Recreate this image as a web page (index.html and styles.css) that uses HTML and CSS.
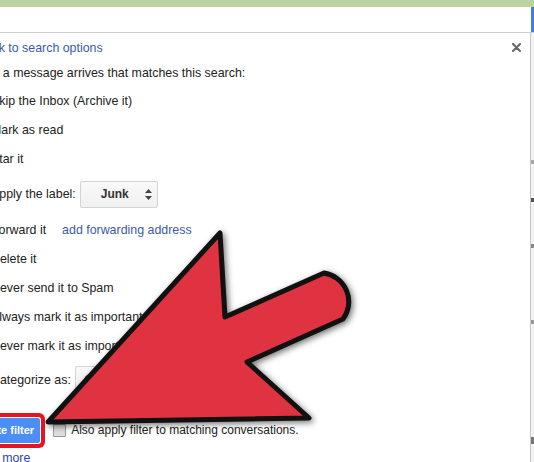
FILE: index.html
```html
<!DOCTYPE html>
<html lang="en">
<head>
    <meta charset="UTF-8">
    <title>Create filter</title>
    <link rel="stylesheet" href="styles.css">
</head>
<body>

    <div class="topbar"></div>
    <div class="searchrow"><span class="edge"></span></div>

    <div class="page">
        <div class="dialog">
            <svg class="close" width="9" height="9" viewBox="0 0 9 9">
                <path d="M1 1 L8 8 M8 1 L1 8" stroke="#6b6b6b" stroke-width="2.2" stroke-linecap="round"/>
            </svg>
            <div class="content">
                <div class="back"><a href="#">&laquo; Back to search options</a></div>
                <div class="intro">When a message arrives that matches this search:</div>

                <div class="opt"><span class="cb"></span>Skip the Inbox (Archive it)</div>
                <div class="opt"><span class="cb"></span>Mark as read</div>
                <div class="opt"><span class="cb"></span>Star it</div>
                <div class="opt apply">
                    <span class="cb"></span>Apply the label:
                    <span class="select junk">Junk
                        <svg width="7" height="11" viewBox="0 0 7 11"><path d="M3.5 0 L7 4 H0 Z M0 7 H7 L3.5 11 Z" fill="#444"/></svg>
                    </span>
                </div>
                <div class="opt"><span class="cb"></span>Forward it <a class="fwd" href="#">add forwarding address</a></div>
                <div class="opt"><span class="cb"></span>Delete it</div>
                <div class="opt"><span class="cb"></span>Never send it to Spam</div>
                <div class="opt"><span class="cb"></span>Always mark it as important</div>
                <div class="opt"><span class="cb"></span>Never mark it as important</div>
                <div class="opt categorize">
                    <span class="cb"></span>Categorize as:
                    <span class="select category">Choose category...</span>
                </div>

                <div class="actions">
                    <button class="create">Create filter</button>
                    <span class="cb small"></span>
                    <span class="also">Also apply filter to matching conversations.</span>
                </div>
                <div class="learn"><a href="#">Learn more</a></div>
            </div>
        </div>
        <div class="side">
            <span class="mark m1"></span>
            <span class="mark m2"></span>
            <span class="mark m3"></span>
            <span class="mark m4"></span>
            <span class="mark m5"></span>
        </div>
    </div>

    <!-- big red pointer drawn over the dialog -->
    <svg class="arrow" width="534" height="462" viewBox="0 0 534 462">
        <path d="M48 422 L220 233 L225 317 L324 273 A29 29 0 0 1 343 319 L247 362 L309 418 Z"
              fill="#e03341" stroke="#111" stroke-width="5" stroke-linejoin="round"/>
    </svg>

</body>
</html>
```

FILE: styles.css
```css
* {
    margin: 0;
    padding: 0;
    box-sizing: border-box;
}

body {
    width: 534px;
    height: 462px;
    overflow: hidden;
    position: relative;
    background: #fff;
    font-family: "Liberation Sans", Arial, sans-serif;
    font-size: 12.4px;
    color: #222;
}

a {
    color: #3a5aa8;
    text-decoration: none;
}

.topbar {
    height: 7px;
    background: #bcd2a1;
}

.searchrow {
    height: 26px;
    display: flex;
    justify-content: flex-end;
    border-bottom: 1px solid #cfcfcf;
}

.searchrow .edge {
    width: 3px;
    background: #3f7ee6;
}

.page {
    display: flex;
    height: 429px;
}

.dialog {
    flex: 1;
    position: relative;
    overflow: hidden;
}

.close {
    position: absolute;
    top: 10px;
    right: 9px;
}

.content {
    margin-left: -33px;
    padding-top: 3px;
    white-space: nowrap;
}

.back {
    height: 24px;
    line-height: 24px;
}

.intro {
    height: 26px;
    line-height: 26px;
}

.opt {
    height: 29px;
    display: flex;
    align-items: center;
    padding-left: 5px;
}

.cb {
    width: 13px;
    height: 13px;
    border: 1px solid #b5b5b5;
    border-radius: 1px;
    margin-right: 6px;
    background: #fff;
}

.apply {
    height: 42px;
}

.categorize {
    height: 40px;
}

.select {
    display: inline-flex;
    align-items: center;
    height: 27px;
    border: 1px solid #d3d3d3;
    border-radius: 2px;
    background: linear-gradient(#f9f9f9, #f0f0f0);
    font-size: 12px;
    color: #333;
}

.junk {
    width: 78px;
    margin-left: 4px;
    padding: 0 5px 0 20px;
    justify-content: space-between;
    font-weight: bold;
}

.category {
    margin-left: 4px;
    padding: 0 24px 0 8px;
    height: 28px;
}

.fwd {
    margin-left: 16px;
}

.actions {
    margin-top: 8px;
    height: 44px;
    display: flex;
    align-items: center;
}

.create {
    margin-left: 0;
    height: 25px;
    padding: 0 6px;
    border: none;
    border-radius: 2px;
    background: #4b8ef5;
    color: #fff;
    font-family: "Liberation Sans", Arial, sans-serif;
    font-size: 11px;
    font-weight: bold;
    box-shadow: 0 0 0 1px #fff, 0 0 0 5px #e5161f;
}

.cb.small {
    margin-left: 13px;
    margin-right: 5px;
    border-color: #999;
    background: #ddd;
}

.also {
    font-size: 12px;
}

.learn {
    height: 12px;
    line-height: 12px;
}

.learn a {
    color: #2f46a6;
}

.side {
    width: 4px;
    border-left: 1px solid #c6c6c6;
    background: #f3f3f3;
    display: flex;
    flex-direction: column;
}

.mark {
    height: 4px;
    width: 3px;
    background: #888;
}

.m1 { margin-top: 127px; background: #aaa; }
.m2 { margin-top: 34px; background: #555; }
.m3 { margin-top: 42px; }
.m4 { margin-top: 72px; background: #999; }
.m5 { margin-top: 113px; height: 7px; background: #777; }

.arrow {
    position: absolute;
    top: 0;
    left: 0;
    pointer-events: none;
    filter: drop-shadow(2px 2px 3px rgba(0, 0, 0, 0.55));
}
```
